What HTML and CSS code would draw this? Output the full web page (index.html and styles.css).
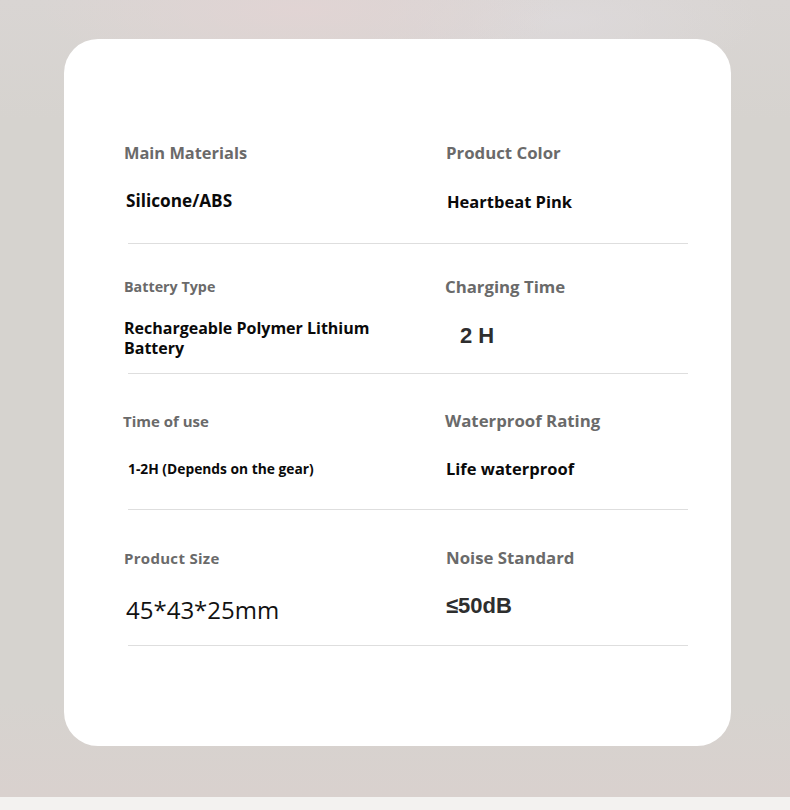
FILE: index.html
```html
<!DOCTYPE html>
<html lang="en">
<head>
<meta charset="utf-8">
<title>Specifications</title>
<link rel="stylesheet" href="styles.css">
</head>
<body>
<div class="page">
  <div class="card">
    <div class="specs">
      <div class="row row-1">
        <div class="cell">
          <div class="label l-main">Main Materials</div>
          <div class="value v-silicone">Silicone/ABS</div>
        </div>
        <div class="cell">
          <div class="label l-color">Product Color</div>
          <div class="value v-pink">Heartbeat Pink</div>
        </div>
      </div>
      <div class="divider"></div>
      <div class="row row-2">
        <div class="cell">
          <div class="label l-battery">Battery Type</div>
          <div class="value v-battery">Rechargeable Polymer Lithium<br>Battery</div>
        </div>
        <div class="cell">
          <div class="label l-charge">Charging Time</div>
          <div class="value num v-2h">2 H</div>
        </div>
      </div>
      <div class="divider"></div>
      <div class="row row-3">
        <div class="cell">
          <div class="label l-use">Time of use</div>
          <div class="value v-use">1-2H (Depends on the gear)</div>
        </div>
        <div class="cell">
          <div class="label l-water">Waterproof Rating</div>
          <div class="value v-water">Life waterproof</div>
        </div>
      </div>
      <div class="divider"></div>
      <div class="row row-4">
        <div class="cell">
          <div class="label l-size">Product Size</div>
          <div class="value v-size">45*43*25mm</div>
        </div>
        <div class="cell">
          <div class="label l-noise">Noise Standard</div>
          <div class="value num v-noise">≤50dB</div>
        </div>
      </div>
      <div class="divider"></div>
    </div>
  </div>
  <div class="strip"></div>
</div>
</body>
</html>
```

FILE: styles.css
```css
html, body {
  margin: 0;
  padding: 0;
}
body {
  width: 790px;
  height: 810px;
  overflow: hidden;
  font-family: "Open Sans", "Noto Sans", sans-serif;
  background:
    radial-gradient(ellipse 260px 70px at 300px 10px, rgba(226, 212, 212, 0.9), rgba(226, 212, 212, 0) 100%),
    radial-gradient(ellipse 200px 60px at 560px 20px, rgba(222, 218, 220, 0.8), rgba(222, 218, 220, 0) 100%),
    linear-gradient(to bottom, #d9d5d3 0px, #d6d3cf 120px, #d6d3cf 700px, #d9d1ce 795px);
}
.page {
  display: flex;
  flex-direction: column;
  padding-top: 39px;
}
.card {
  margin-left: 64px;
  width: 667px;
  height: 707px;
  background: #ffffff;
  border-radius: 34px;
  box-sizing: border-box;
  padding: 0 0 0 60px;
}
.specs {
  display: flex;
  flex-direction: column;
}
.row {
  display: grid;
  grid-template-columns: 322px 1fr;
  box-sizing: border-box;
}
.row-1 { height: 204px; padding-top: 103px; }
.row-2 { height: 129px; padding-top: 32px; }
.row-3 { height: 135px; padding-top: 36px; }
.row-4 { height: 135px; padding-top: 37px; }

.cell {
  display: flex;
  flex-direction: column;
}
.label {
  color: #6a6a6a;
  font-weight: 700;
  font-size: 16.8px;
  line-height: 22px;
  height: 22px;
  white-space: nowrap;
}
.value {
  color: #0a0a0a;
  font-weight: 700;
  font-size: 16.5px;
  line-height: 22px;
  white-space: nowrap;
}
.divider {
  height: 1px;
  background: #dedede;
  margin-left: 4px;
  width: 560px;
}

/* row 1 */
.l-main { font-size: 16.4px; }
.v-silicone { margin-top: 26px; margin-left: 2px; font-size: 17.2px; }
.v-pink { margin-top: 27px; margin-left: 1px; }

/* row 2 */
.l-battery { font-size: 14.3px; }
.v-battery { margin-top: 20px; line-height: 20px; font-size: 16px; }
.l-charge { margin-left: -1px; }
.num {
  font-family: "Liberation Sans", Arial, sans-serif;
  color: #2e2e2e;
}
.v-2h { margin-top: 25px; margin-left: 14px; font-size: 22px; line-height: 26px; }

/* row 3 */
.l-use { font-size: 15px; margin-left: -1px; }
.v-use { margin-top: 26px; margin-left: 4px; font-size: 13.8px; }
.l-water { margin-left: -1px; }
.v-water { margin-top: 26px; }

/* row 4 */
.l-size { font-size: 15px; letter-spacing: 0.3px; }
.v-size {
  margin-top: 26px;
  margin-left: 2px;
  font-weight: 400;
  font-size: 24px;
  line-height: 30px;
  color: #111;
}
.v-noise { margin-top: 24px; font-size: 22px; line-height: 26px; }

.strip {
  margin-top: 51px;
  height: 13px;
  background: #f3f2f0;
}
```
